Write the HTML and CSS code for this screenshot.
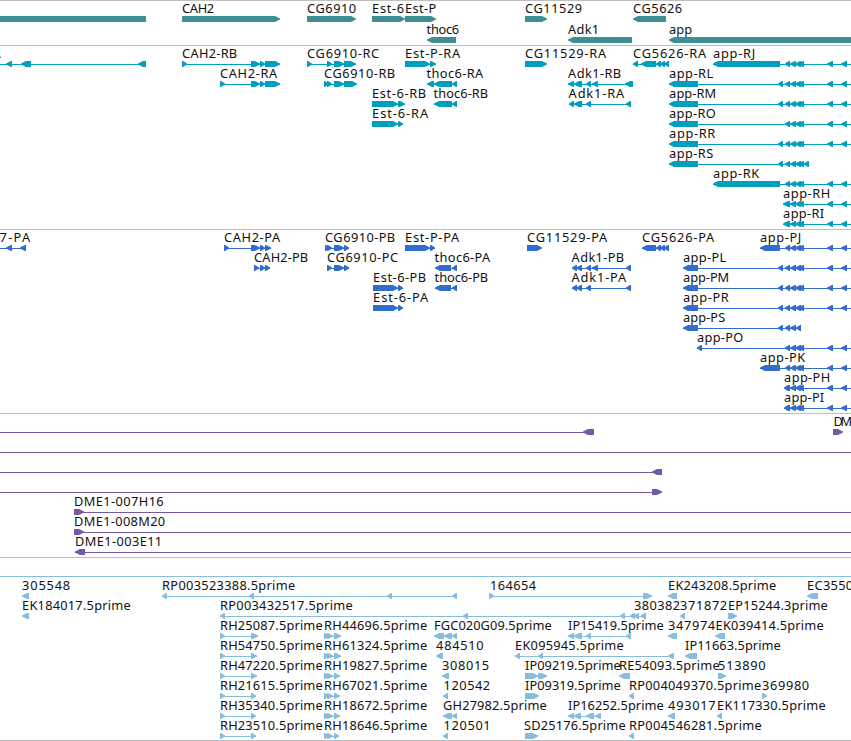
FILE: index.html
```html
<!DOCTYPE html>
<html lang="en">
<head>
    <meta charset="UTF-8">
    <meta name="viewport" content="width=device-width, initial-scale=1.0">
    <title>Genome browser</title>
    <link rel="stylesheet" href="styles.css">
</head>
<body>
<main class="browser">
    <section class="track genes"><svg id="genes"></svg></section>
    <section class="track transcripts"><svg id="transcripts"></svg></section>
    <section class="track proteins"><svg id="proteins"></svg></section>
    <section class="track clones"><svg id="clones"></svg></section>
    <section class="track ests"><svg id="ests"></svg></section>
</main>
<script src="tracks.js"></script>
</body>
</html>
```

FILE: styles.css
```css
html, body {
    margin: 0;
    background-color: #fff;
}

body {
    font-family: 'Noto Sans', 'DejaVu Sans', sans-serif;
    font-size: 12.8px;
}

.browser {
    display: flex;
    flex-direction: column;
    width: 851px;
    height: 740px;
    overflow: hidden;
    border-bottom: 1px solid #bebebe;
}

.track {
    box-sizing: border-box;
    height: 184px;
    border-top: 1px solid #bebebe;
}

.track svg {
    display: block;
    width: 100%;
    height: 100%;
    overflow: visible;
}

.track text {
    fill: #111;
}

.genes {
    height: 45px;
    color: #3f8e94;
}

.transcripts {
    color: #009fc0;
}

.proteins {
    color: #326ccc;
}

.clones {
    height: 144px;
    color: #7359a8;
}

.ests {
    height: 183px;
    color: #88bddd;
}

.glyph {
    fill: currentColor;
}
```

FILE: tracks.js
```javascript
const NS = 'http://www.w3.org/2000/svg';
const WIDTH = 851;

// exons of app that are shared by most of the isoforms
const APP = '785-790 790-796 795-801 798-804 827-833 841-847 900-905';
const APP_LONG = '778-783 ' + APP;

// [row, label, label start, label end, strand, exons]
const genes = [
    [0, '', 0, 0, '-', '-20-146'],
    [0, 'CAH2', 182.5, 214, '+', '182-280'],
    [0, 'CG6910', 307.5, 356, '+', '307-356'],
    [0, 'Est-6', 372.5, 404, '+', '372-405'],
    [0, 'Est-P', 405.5, 436, '+', '405-436'],
    [0, 'CG11529', 525.5, 582, '+', '525-547'],
    [0, 'CG5626', 633.5, 682, '-', '633-666'],
    [1, 'thoc6', 427, 459, '-', '427-456'],
    [1, 'Adk1', 568.5, 599, '-', '568-632'],
    [1, 'app', 669.5, 692, '-', '669-871']
];

const transcripts = [
    [0, '7-RA', -29, 0.5, '-', '-20--10 6-12 21-31 138-146'],
    [0, 'CAH2-RB', 182.5, 237, '+', '182-187 251-260 260-265 265-280'],
    [1, 'CAH2-RA', 220.5, 277, '+', '220-225 251-260 260-265 265-280'],
    [0, 'CG6910-RC', 307.5, 379, '+', '307-312 327-332 334-344 344-356'],
    [1, 'CG6910-RB', 324.5, 395, '+', '324-328 327-332 334-344 344-357'],
    [2, 'Est-6-RB', 372.5, 426, '+', '372-398 398-405'],
    [3, 'Est-6-RA', 372.5, 428, '+', '372-398 398-403'],
    [0, 'Est-P-RA', 405.5, 460, '+', '405-430 430-436'],
    [1, 'thoc6-RA', 427, 483, '-', '427-434 434-452 452-457'],
    [2, 'thoc6-RB', 434, 488, '-', '434-452 452-457'],
    [0, 'CG11529-RA', 525.5, 606, '+', '525-547'],
    [1, 'Adk1-RB', 568.5, 621, '-', '568-574 574-582 586-591 592-598 625-633'],
    [2, 'Adk1-RA', 569, 624, '-', '569-574 574-582 586-591 626-631'],
    [0, 'CG5626-RA', 633.5, 706, '-', '633-638 641-656 656-661 660-665 664-669'],
    [0, 'app-RJ', 713.5, 755, '-', '713-780 ' + APP],
    [1, 'app-RL', 669.5, 713, '-', '669-698 ' + APP_LONG],
    [2, 'app-RM', 669.5, 716, '-', '669-698 ' + APP_LONG],
    [3, 'app-RO', 669.5, 715.5, '-', '669-698 ' + APP],
    [4, 'app-RR', 669.5, 715, '-', '669-698 ' + APP_LONG],
    [5, 'app-RS', 669.5, 713, '-', '669-698 778-783 785-790 790-796 795-801 798-804 804-809'],
    [6, 'app-RK', 713.5, 759, '-', '713-780 ' + APP],
    [7, 'app-RH', 783.5, 830, '-', '783-789 ' + APP],
    [8, 'app-RI', 783.5, 824, '-', '783-789 ' + APP]
];

const proteins = [
    [0, '7-PA', 0, 30, '-', '-20--10 6-12 20-26'],
    [0, 'CAH2-PA', 224.5, 280, '+', '224-229 251-260 260-265 265-271'],
    [1, 'CAH2-PB', 254.5, 308, '+', '254-259 260-265 265-270'],
    [0, 'CG6910-PB', 325.5, 395, '+', '325-329 327-332 334-344 344-349'],
    [1, 'CG6910-PC', 327.5, 398, '+', '327-332 334-344 344-349'],
    [2, 'Est-6-PB', 373.5, 426, '+', '373-398 398-403'],
    [3, 'Est-6-PA', 373.5, 428, '+', '373-398 398-403'],
    [0, 'Est-P-PA', 405.5, 459, '+', '405-430 430-435'],
    [1, 'thoc6-PA', 435, 490, '-', '435-451 452-457'],
    [2, 'thoc6-PB', 435, 488, '-', '435-451 452-457'],
    [0, 'CG11529-PA', 527.5, 607, '+', '527-542'],
    [1, 'Adk1-PB', 572, 624, '-', '572-577 576-582 586-591 592-598 626-631'],
    [2, 'Adk1-PA', 572, 626, '-', '572-577 576-582 586-591 626-631'],
    [0, 'CG5626-PA', 642.5, 714, '-', '642-656 656-661 660-665 664-669'],
    [0, 'app-PJ', 760.5, 801, '-', '760-780 ' + APP],
    [1, 'app-PL', 683.5, 726, '-', '683-698 ' + APP_LONG],
    [2, 'app-PM', 683.5, 729, '-', '683-698 ' + APP_LONG],
    [3, 'app-PR', 683.5, 728.5, '-', '683-698 ' + APP_LONG],
    [4, 'app-PS', 683.5, 725, '-', '683-698 778-783 785-790 790-796 796-801'],
    [5, 'app-PO', 697.5, 743, '-', '697-702 ' + APP],
    [6, 'app-PK', 760.5, 805, '-', '760-780 ' + APP],
    [7, 'app-PH', 784.5, 830, '-', '784-789 ' + APP],
    [8, 'app-PI', 784.5, 824, '-', '784-789 ' + APP]
];

const clones = [
    [0, '', 0, 0, '-', '-20--10 583-594'],
    [0, 'DM', 834, 852, '+', '833-843'],
    [1, '', 0, 0, '-', '-20--10 900-910'],
    [2, '', 0, 0, '-', '-20--10 652-662'],
    [3, '', 0, 0, '+', '-20--10 652-662'],
    [4, 'DME1-007H16', 74.5, 163.5, '+', '74-84 900-910'],
    [5, 'DME1-008M20', 74.5, 165, '+', '74-84 900-910'],
    [6, 'DME1-003E11', 75.5, 162, '-', '75-85 900-910']
];

const ests = [
    [0, '', 0, 0, '-', '-20--10 900-910'],
    [1, '305548', 22.5, 70, '-', '22-29'],
    [1, 'RP003523388.5prime', 162.5, 295, '-', '162-167 249-254 387-392 452-457'],
    [1, '164654', 490.5, 536, '+', '489-494 643-652'],
    [1, 'EK243208.5prime', 668.5, 776, '-', '668-677'],
    [1, 'EC3550', 807.5, 853, '-', '807-818'],
    [2, 'EK184017.5prime', 22.5, 130.5, '-', '22-29'],
    [2, 'RP003432517.5prime', 220.5, 352.5, '-', '220-225 463-468 620-625 630-635 634-639 641-646'],
    [2, '380382', 634.5, 680, '-', '641-646'],
    [2, '371872', 680.5, 727, '-', '680-685'],
    [2, 'EP15244.3prime', 728.5, 827.5, '+', '728-737'],
    [3, 'RH25087.5prime', 220.5, 322.5, '+', '220-225 251-258'],
    [3, 'RH44696.5prime', 324.5, 427, '+', '324-329 327-333 334-341'],
    [3, 'FGC020G09.5prime', 434.5, 551.5, '-', '434-444 444-452 452-457'],
    [3, 'IP15419.5prime', 568.5, 663.5, '-', '568-574 574-582 586-591 626-631'],
    [3, '347974', 668.5, 715, '-', '668-677'],
    [3, 'EK039414.5prime', 716, 823.5, '-', '715-725'],
    [4, 'RH54750.5prime', 220.5, 322.5, '+', '220-225 251-257'],
    [4, 'RH61324.5prime', 324.5, 427, '+', '324-329 327-333 334-341'],
    [4, '484510', 436.5, 483.5, '-', '436-443'],
    [4, 'EK095945.5prime', 515.5, 623.5, '-', '515-520 538-543 668-674'],
    [4, 'IP11663.5prime', 685.5, 780.5, '-', '685-697'],
    [5, 'RH47220.5prime', 220.5, 322.5, '+', '220-225 251-257'],
    [5, 'RH19827.5prime', 324.5, 427, '+', '324-329 327-333 334-340'],
    [5, '308015', 442.5, 489, '-', '442-449'],
    [5, 'IP09219.5prime', 525.5, 620.5, '+', '525-538 538-547'],
    [5, 'RE54093.5prime', 619.5, 719.5, '-', '619-630'],
    [5, '513890', 718.5, 765.5, '+', '718-726'],
    [6, 'RH21615.5prime', 220.5, 322.5, '+', '220-225 251-256'],
    [6, 'RH67021.5prime', 324.5, 427, '+', '324-329 327-333 334-340'],
    [6, '120542', 444, 490, '-', '443-448'],
    [6, 'IP09319.5prime', 525.5, 620.5, '+', '525-539'],
    [6, 'RP004049370.5prime', 629.5, 761, '-', '629-634'],
    [6, '369980', 762.5, 809, '+', '762-767'],
    [7, 'RH35340.5prime', 220.5, 322.5, '+', '220-225 251-256'],
    [7, 'RH18672.5prime', 324.5, 427, '+', '324-329 327-333 334-340'],
    [7, 'GH27982.5prime', 443.5, 546.5, '-', '443-452 452-457'],
    [7, 'IP16252.5prime', 568.5, 663.5, '-', '568-574 574-581 586-594 595-601'],
    [7, '493017', 668.5, 715.5, '-', '668-675'],
    [7, 'EK117330.5prime', 717.5, 825.5, '-', '717-722'],
    [8, 'RH23510.5prime', 220.5, 322.5, '+', '220-225 251-256'],
    [8, 'RH18646.5prime', 324.5, 427, '+', '324-329 327-333 334-339'],
    [8, '120501', 444, 490.5, '-', '443-448'],
    [8, 'SD25176.5prime', 524.5, 625.5, '+', '525-538'],
    [8, 'RP004546281.5prime', 629.5, 761.5, '-', '629-634']
];

const add = (svg, name, attrs) => {
    const el = document.createElementNS(NS, name);
    Object.keys(attrs).forEach(key => el.setAttribute(key, attrs[key]));
    svg.appendChild(el);
    return el;
};

const arrow = (start, end, strand, top) => {
    const tip = Math.min(6, end - start);
    const mid = top + 3;
    const bottom = top + 6;
    if (strand === '+') {
        return `${start},${top} ${end - tip + 1},${top} ${end},${mid - .5} ${end},${mid + .5} ${end - tip + 1},${bottom} ${start},${bottom}`;
    }
    return `${end},${top} ${start + tip - 1},${top} ${start},${mid - .5} ${start},${mid + .5} ${start + tip - 1},${bottom} ${end},${bottom}`;
};

const draw = (id, features, pitch) => {
    const svg = document.getElementById(id);
    features.forEach(([row, label, from, to, strand, list]) => {
        const base = 12 + row * pitch;
        const exons = list.split(' ').map(item => item.match(/^(-?\d+)-(-?\d+)$/).slice(1).map(Number));
        const first = Math.max(0, exons[0][0]);
        const last = Math.min(WIDTH, exons[exons.length - 1][1]);
        if (exons.length > 1) {
            add(svg, 'rect', {class: 'glyph', x: first, y: base + 6, width: last - first, height: 1});
        }
        exons.filter(([start, end]) => end > 0 && start < WIDTH).forEach(([start, end]) => {
            add(svg, 'polygon', {class: 'glyph', points: arrow(start, end, strand, base + 3)});
        });
        if (label) {
            add(svg, 'text', {x: from - .4, y: base, textLength: to - from + .6}).textContent = label;
        }
    });
};

draw('genes', genes, 21);
draw('transcripts', transcripts, 20);
draw('proteins', proteins, 20);
draw('clones', clones, 20);
draw('ests', ests, 20);
```
